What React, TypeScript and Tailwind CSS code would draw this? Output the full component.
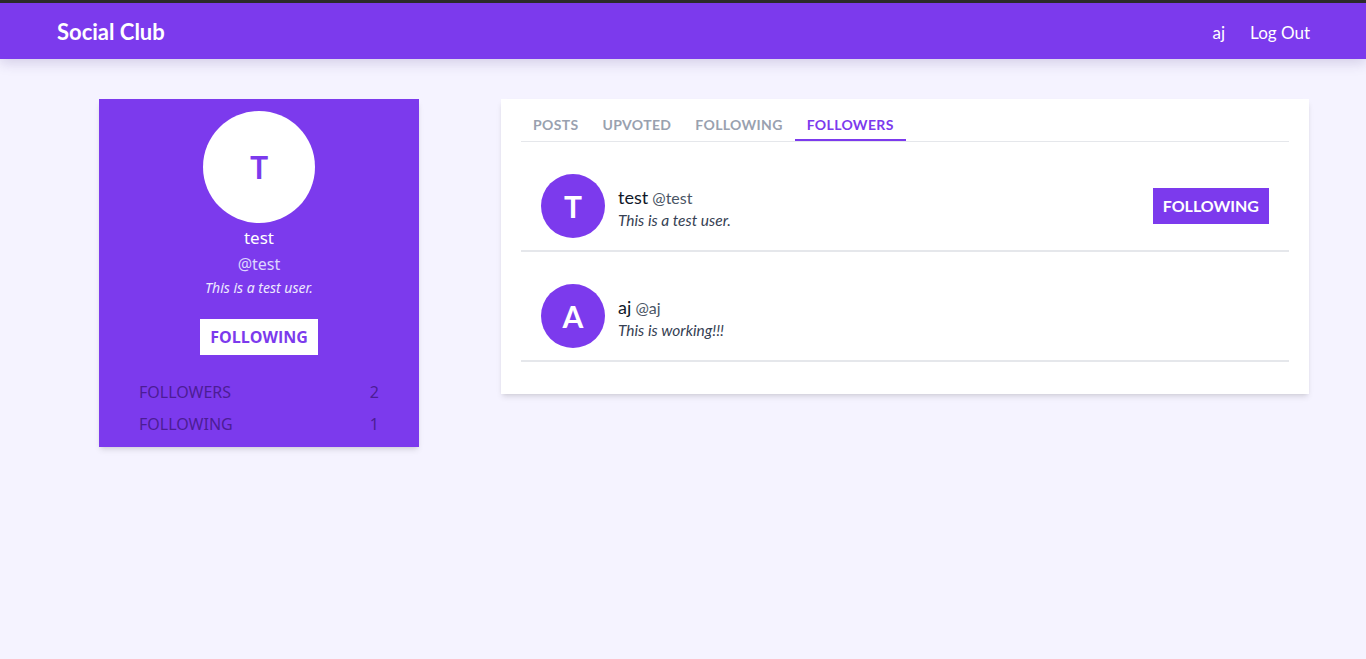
import React from 'react';

const tabs = ['Posts', 'Upvoted', 'Following', 'Followers'];

const people = [
  { initial: 'T', name: 'test', handle: '@test', bio: 'This is a test user.', following: true },
  { initial: 'A', name: 'aj', handle: '@aj', bio: 'This is working!!!', following: false },
];

const Navbar: React.FC = () => (
  <header className="border-t-[3px] border-[#2b2b2b] bg-[#7c3aed] h-[59px] shadow-[0_4px_12px_rgba(60,40,120,0.18)] flex items-center justify-between pl-[57px] pr-[56px] text-white">
    <a href="#" className="text-[22px] font-bold">Social Club</a>
    <nav className="flex items-center gap-[25px] text-[17px] pt-[3px]">
      <a href="#">aj</a>
      <a href="#">Log Out</a>
    </nav>
  </header>
);

const ProfileCard: React.FC = () => (
  <aside
    className="w-[320px] bg-[#7c3aed] shadow-md flex flex-col items-center pt-3 pb-[11px] text-white"
    style={{ fontFamily: '"Noto Sans", sans-serif' }}
  >
    <div className="h-[112px] w-[112px] rounded-full bg-white flex items-center justify-center text-[#7c3aed] text-[32px] font-semibold">
      T
    </div>
    <div className="mt-[3px] text-[17px] leading-[24px]">test</div>
    <div className="mt-[2px] text-[16px] leading-[24px] text-violet-200">@test</div>
    <div className="mt-[2px] text-[14px] leading-[20px] italic text-violet-100">This is a test user.</div>
    <button
      className="mt-[21px] h-[36px] px-[10px] bg-white text-[#7c3aed] text-[16px] font-bold"
      style={{ fontFamily: '"Open Sans", sans-serif' }}
    >
      FOLLOWING
    </button>
    <div className="mt-[25px] w-full px-10 text-[16px] text-[#4c1d95] flex flex-col gap-[8px]">
      <div className="flex justify-between leading-[24px]">
        <span>FOLLOWERS</span>
        <span>2</span>
      </div>
      <div className="flex justify-between leading-[24px]">
        <span>FOLLOWING</span>
        <span>1</span>
      </div>
    </div>
  </aside>
);

const PersonRow: React.FC<{ p: typeof people[number] }> = ({ p }) => (
  <div className="flex items-center pt-8 pb-3 px-5 border-b-2 border-gray-200">
    <div className="h-16 w-16 shrink-0 rounded-full bg-[#7c3aed] text-white flex items-center justify-center text-[30px] font-bold">
      {p.initial}
    </div>
    <div className="ml-[13px] flex-1 pt-[2px]">
      <div className="leading-[24px]">
        <span className="text-[18px] text-gray-900">{p.name}</span>{' '}
        <span className="text-[16px] text-gray-600">{p.handle}</span>
      </div>
      <div className="text-[15.5px] italic text-gray-700 leading-[20px]">{p.bio}</div>
    </div>
    {p.following && (
      <button className="h-9 px-[10px] bg-[#7c3aed] text-white text-[16px] font-bold">FOLLOWING</button>
    )}
  </div>
);

const App: React.FC = () => {
  return (
    <div className="min-h-[659px] bg-[#f5f3ff]" style={{ fontFamily: 'Lato, "Open Sans", sans-serif' }}>
      <Navbar />
      <main className="flex items-start gap-[82px] pl-[99px] pr-[57px] pt-[40px]">
        <ProfileCard />
        <section className="flex-1 bg-white shadow-md pt-[11px] pb-8">
          <div className="mx-5 flex border-b border-gray-200">
            {tabs.map((t, i) => (
              <button
                key={t}
                className={
                  i === 3
                    ? 'px-3 pb-[1px] h-[31px] text-[14px] font-bold uppercase tracking-wide text-[#7c3aed] border-b-2 border-[#7c3aed]'
                    : 'px-3 pb-[1px] h-[31px] text-[14px] font-bold uppercase tracking-wide text-gray-400 border-b-2 border-transparent'
                }
              >
                {t}
              </button>
            ))}
          </div>
          {people.map(p => (
            <div key={p.name} className="mx-5">
              <PersonRow p={p} />
            </div>
          ))}
        </section>
      </main>
    </div>
  );
};

export default App;
